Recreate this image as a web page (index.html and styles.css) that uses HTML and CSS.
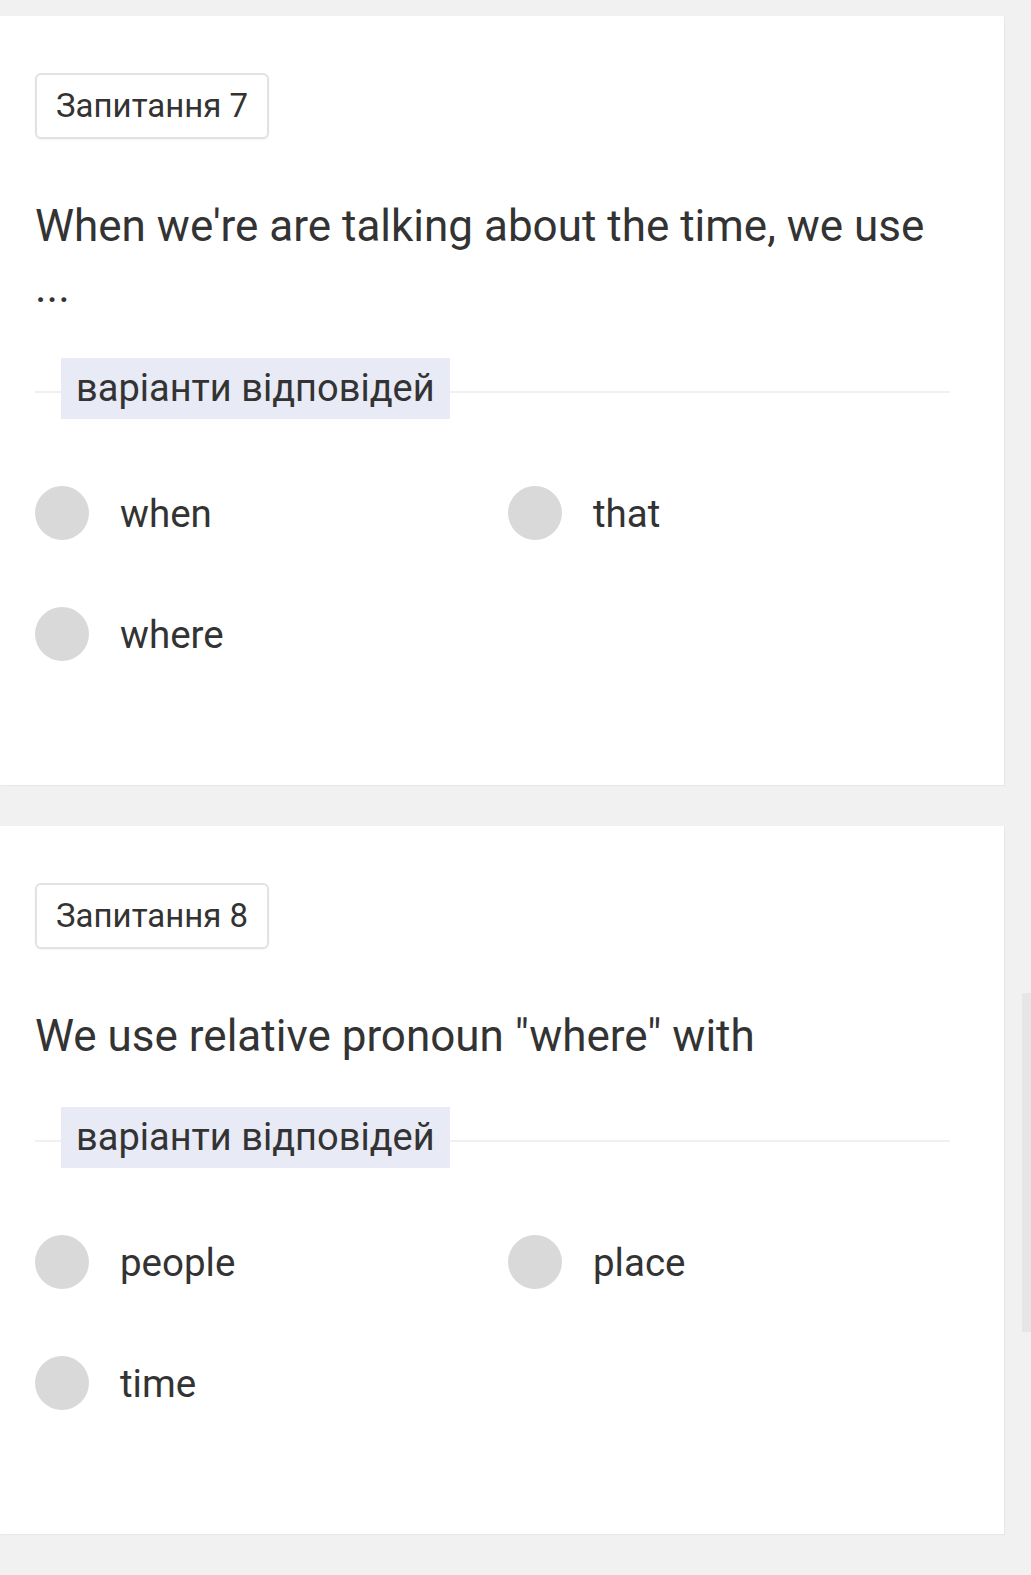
FILE: index.html
```html
<!DOCTYPE html>
<html lang="uk">
<head>
<meta charset="utf-8">
<title>Запитання</title>
<link rel="stylesheet" href="styles.css">
</head>
<body>
<main class="feed">
  <section class="card">
    <div class="tag">Запитання 7</div>
    <p class="question">When we're are talking about the time, we use ...</p>
    <div class="sep"><span class="sep-label">варіанти відповідей</span></div>
    <ul class="options">
      <li class="option"><span class="radio"></span><span class="opt-text">when</span></li>
      <li class="option"><span class="radio"></span><span class="opt-text">that</span></li>
      <li class="option"><span class="radio"></span><span class="opt-text">where</span></li>
    </ul>
  </section>
  <section class="card">
    <div class="tag">Запитання 8</div>
    <p class="question">We use relative pronoun "where" with</p>
    <div class="sep"><span class="sep-label">варіанти відповідей</span></div>
    <ul class="options">
      <li class="option"><span class="radio"></span><span class="opt-text">people</span></li>
      <li class="option"><span class="radio"></span><span class="opt-text">place</span></li>
      <li class="option"><span class="radio"></span><span class="opt-text">time</span></li>
    </ul>
  </section>
  <section class="card card-next"></section>
</main>
<div class="scroll-thumb"></div>
</body>
</html>
```
FILE: styles.css
```css
html, body {
  margin: 0;
  padding: 0;
  background: #f1f1f1;
}
body {
  font-family: Roboto, "Noto Sans", Arial, sans-serif;
  color: #333333;
  overflow: hidden;
}
.feed {
  display: flex;
  flex-direction: column;
  gap: 41px;
  padding-top: 16px;
}
.card {
  width: 1004px;
  box-sizing: border-box;
  background: #ffffff;
  padding: 57px 54px 124px 35px;
  box-shadow: 1px 1px 1px rgba(0,0,0,0.04);
  display: flex;
  flex-direction: column;
  align-items: flex-start;
}
.card-next {
  height: 300px;
}
.tag {
  box-sizing: border-box;
  height: 66px;
  padding: 0 19px;
  border: 2px solid #e2e2e2;
  border-radius: 6px;
  font-size: 33px;
  line-height: 62px;
  color: #333333;
  box-shadow: 0 1px 2px rgba(0,0,0,0.05);
}
.question {
  margin: 57px 0 0;
  font-size: 44px;
  line-height: 61px;
  color: #333333;
  width: 100%;
}
.sep {
  margin-top: 40px;
  width: 100%;
  display: flex;
  align-items: center;
}
.sep::before,
.sep::after {
  content: "";
  height: 2px;
  background: #f0f0ee;
  margin-top: 7px;
}
.sep::before {
  width: 26px;
}
.sep::after {
  flex: 1;
}
.sep-label {
  background: #e8eaf5;
  height: 61px;
  line-height: 61px;
  padding: 0 15px;
  font-size: 38px;
  color: #333333;
}
.options {
  list-style: none;
  margin: 67px 0 0;
  padding: 0;
  width: 100%;
  display: grid;
  grid-template-columns: 473px 1fr;
  row-gap: 67px;
}
.option {
  display: flex;
  align-items: center;
  gap: 31px;
  height: 54px;
}
.radio {
  width: 54px;
  height: 54px;
  border-radius: 50%;
  background: #d9d9d9;
  flex: none;
}
.opt-text {
  font-size: 38.5px;
  color: #333333;
}
.scroll-thumb {
  position: fixed;
  left: 1022px;
  top: 993px;
  width: 9px;
  height: 339px;
  background: #e6e6e6;
}
```
